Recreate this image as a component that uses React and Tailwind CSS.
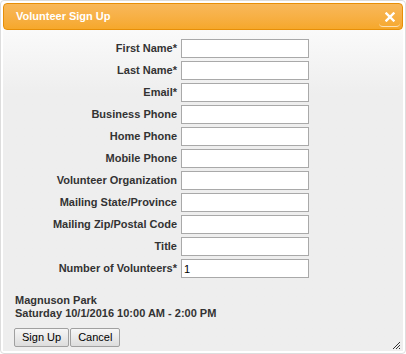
import React from "react";

const fields = [
  { label: "First Name", required: true },
  { label: "Last Name", required: true },
  { label: "Email", required: true },
  { label: "Business Phone" },
  { label: "Home Phone" },
  { label: "Mobile Phone" },
  { label: "Volunteer Organization" },
  { label: "Mailing State/Province" },
  { label: "Mailing Zip/Postal Code" },
  { label: "Title" },
  { label: "Number of Volunteers", required: true, value: "1" },
];

function CloseButton() {
  return (
    <div className="w-[21px] h-[19px] mr-[2px] mt-[2px] rounded-[4px] border-b border-[#fbe0b4] flex items-center justify-center">
      <svg width="10" height="10" viewBox="0 0 10 10">
        <path d="M1.5 1.5 L8.5 8.5 M8.5 1.5 L1.5 8.5" stroke="#fff" strokeWidth="2.4" strokeLinecap="square" />
      </svg>
    </div>
  );
}

export default function App() {
  return (
    <div
      className="w-[406px] h-[354px] bg-white border border-[#dddddd] rounded-[4px] p-[2px] flex flex-col text-[#333333]"
      style={{ fontFamily: '"Liberation Sans", Arial, sans-serif' }}
    >
      <div className="h-[27px] shrink-0 rounded-[4px] border border-[#e78f08] bg-gradient-to-b from-[#f8b85a] to-[#f6a82a] flex items-center justify-between pl-[12px]">
        <span className="text-white font-bold text-[11px]">Volunteer Sign Up</span>
        <CloseButton />
      </div>

      <div className="relative flex-1 bg-gradient-to-b from-[#fafafa] to-[#eeeeee] to-[20%] px-[12px] pt-[9px]">
        <div className="flex flex-col gap-[3px]">
          {fields.map((f) => (
            <div key={f.label} className="flex items-center">
              <label className="w-[166px] pr-[4px] text-right font-bold text-[11px] leading-[13px]">
                {f.label}
                {f.required && "*"}
              </label>
              <input
                type="text"
                defaultValue={f.value || ""}
                className="w-[128px] h-[19px] bg-white border border-[#a9a9a9] px-[2px] text-[11px] text-[#000] focus:outline-none"
              />
            </div>
          ))}
        </div>

        <div className="mt-[16px] font-bold text-[11px] leading-[13px]">
          <p>Magnuson Park</p>
          <p>Saturday 10/1/2016 10:00 AM - 2:00 PM</p>
        </div>

        <div className="mt-[8px] flex -ml-[1px]">
          <button className="h-[19px] px-[7px] text-[11px] text-black border border-[#a0a0a0] rounded-[2px] bg-gradient-to-b from-[#f6f6f6] to-[#dddddd]">
            Sign Up
          </button>
          <button className="h-[19px] ml-[1px] px-[7px] text-[11px] text-black border border-[#a0a0a0] rounded-[2px] bg-gradient-to-b from-[#f6f6f6] to-[#dddddd]">
            Cancel
          </button>
        </div>

        <svg className="absolute right-[2px] bottom-[1px]" width="10" height="10" viewBox="0 0 10 10">
          <path d="M9 2 L2 9 M9 5 L5 9 M9 8 L8 9" stroke="#333" strokeWidth="1" />
        </svg>
      </div>
    </div>
  );
}
